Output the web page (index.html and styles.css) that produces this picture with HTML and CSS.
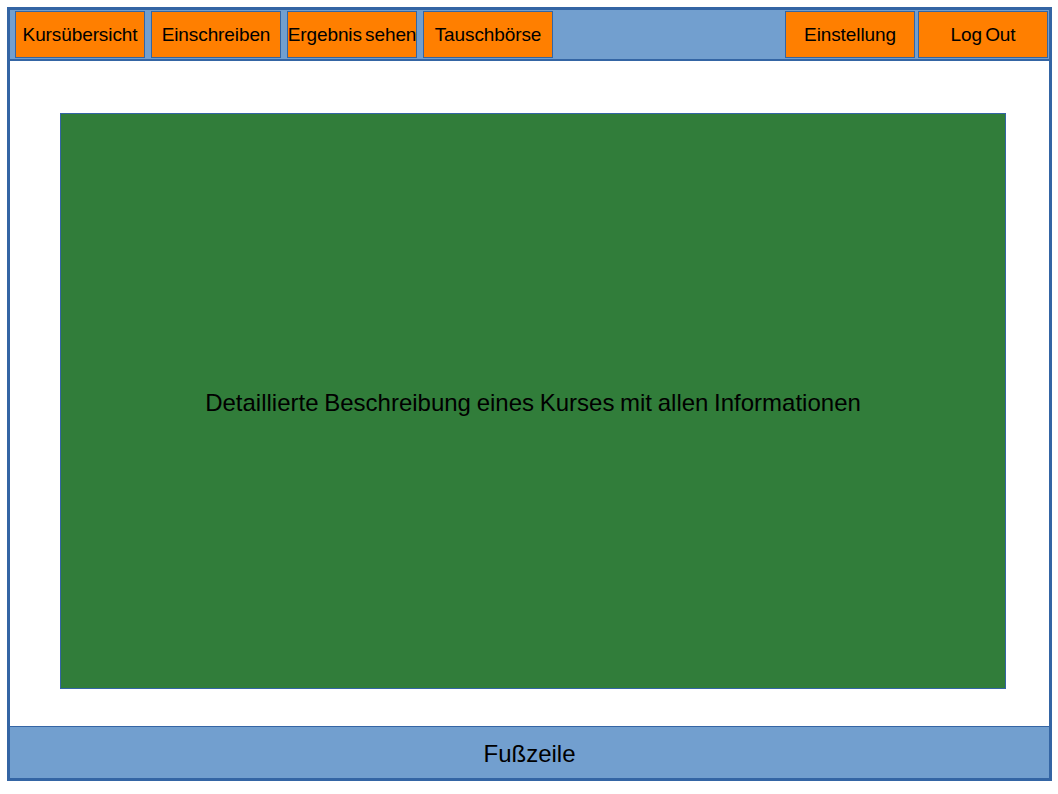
FILE: index.html
```html
<!DOCTYPE html>
<html lang="de">
<head>
<meta charset="utf-8">
<title>Kursdetails</title>
<link rel="stylesheet" href="styles.css">
</head>
<body>
<div class="frame">
  <nav class="nav">
    <div class="nav-group">
      <a class="btn">Kursübersicht</a>
      <a class="btn">Einschreiben</a>
      <a class="btn">Ergebnis sehen</a>
      <a class="btn">Tauschbörse</a>
    </div>
    <div class="nav-group nav-right">
      <a class="btn">Einstellung</a>
      <a class="btn">Log Out</a>
    </div>
  </nav>
  <main class="content">
    <div class="detail">Detaillierte Beschreibung eines Kurses mit allen Informationen</div>
  </main>
  <footer class="footer">Fußzeile</footer>
</div>
</body>
</html>
```
FILE: styles.css
```css
* { box-sizing: border-box; }
html, body { margin: 0; padding: 0; background: #ffffff; }
body { font-family: "Liberation Sans", Arial, sans-serif; color: #000; }
.frame {
  margin: 7px;
  width: 1045px;
  height: 774px;
  border: 3px solid #3465a4;
  display: flex;
  flex-direction: column;
}
.nav {
  height: 51px;
  background: #729fcf;
  border-bottom: 2px solid #3465a4;
  display: flex;
  justify-content: space-between;
  padding: 1px 1px 0 5px;
}
.nav-group { display: flex; gap: 6px; }
.nav-right { gap: 3px; }
.btn {
  width: 130px;
  height: 47px;
  background: #ff7f00;
  border: 1px solid #3465a4;
  display: flex;
  align-items: center;
  justify-content: center;
  font-size: 19px;
  white-space: nowrap;
  letter-spacing: -0.1px;
  word-spacing: -2px;
  overflow: visible;
}
.content {
  flex: 1;
  padding: 52px 43px 37px 50px;
  display: flex;
}
.detail {
  flex: 1;
  background: #317d3a;
  border: 1px solid #3465a4;
  display: flex;
  align-items: center;
  justify-content: center;
  font-size: 24px;
  word-spacing: -1px;
  padding-top: 3px;
}
.footer {
  height: 52px;
  background: #729fcf;
  border-top: 1px solid #3465a4;
  display: flex;
  align-items: center;
  justify-content: center;
  font-size: 24px;
  padding-top: 2px;
}
```
